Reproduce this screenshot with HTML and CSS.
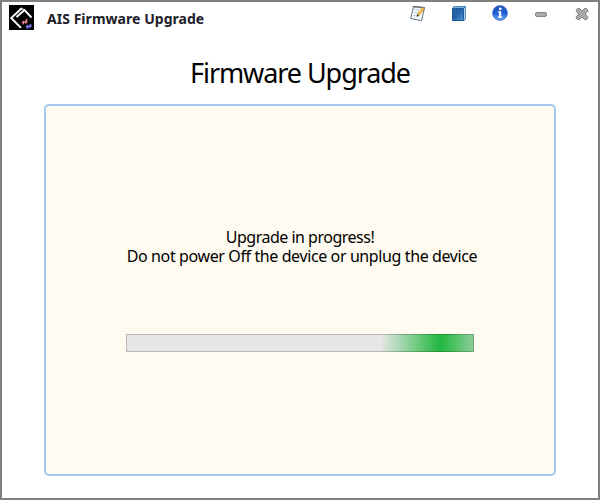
FILE: index.html
```
<!DOCTYPE html>
<html lang="en">
<head>
<meta charset="utf-8">
<title>AIS Firmware Upgrade</title>
<link rel="stylesheet" href="styles.css">
</head>
<body>
<div class="window">
  <header class="titlebar">
    <svg class="logo" viewBox="0 0 25 25">
      <rect width="25" height="25" fill="#000"/>
      <path d="M13 3L2.200 13l9.800 9.800M7.500 12L15.500 5l7 7.500" fill="none" stroke="#fff" stroke-width="1.900"/>
      <path d="M10.500 4.200h4l1.500 1" fill="none" stroke="#fff" stroke-width="1"/>
      <path d="M12 17.500l3-2 1 1.500 1-3h1.500l-.5 2h1l-2 3-1.500-1.500-1 2h-1v-2z" fill="#ef8590"/>
      <path d="M16 21.500l3-2 1 1.500 1-2h1.500l-.5 1.500h1.200l-2.200 3-1.500-1.500-1 2h-1v-2z" fill="#7772e0"/>
    </svg>
    <span class="name">AIS Firmware Upgrade</span>
    <nav class="tools">
      <svg viewBox="0 0 18 18">
        <path d="M4.500 2.500L15.700 3.500 12.500 16.700 1.700 14.500z" fill="#f1f6f9" stroke="#65747f"/>
        <path d="M5.500 5.500l5 .7M5 8.300l5 .7M4 11.200l6 1" stroke="#b4c4ce" stroke-width=".8"/>
        <path d="M4.500 2.700l9.500 1" stroke="#384149" stroke-width="1.600" stroke-dasharray="1 1"/>
        <path d="M9 11l5.500-7" stroke="#e79a24" stroke-width="2.600"/>
        <path d="M9.200 10.200l4.700-6" stroke="#ffd977" stroke-width=".9"/>
        <path d="M7.600 12.700l.5-2.700 2 1.600z" fill="#413d38"/>
      </svg>
      <svg viewBox="0 0 18 18">
        <defs><linearGradient id="book" x1="0" y1="0" x2="1" y2="1"><stop stop-color="#1c5d9f"/><stop offset=".5" stop-color="#2467aa"/><stop offset="1" stop-color="#4f97d2"/></linearGradient></defs>
        <path d="M2 4.500L4 2h12v13l-2 2H2z" fill="#3a78b2"/>
        <path d="M3 4L4.500 2.800h10.300L13.700 4z" fill="#82b5da"/>
        <path d="M14 4.500l1.300-1.500v11.500L14 16z" fill="#b4d3ea"/>
        <path d="M2.500 4.500h11v12h-11z" fill="url(#book)" stroke="#205a98"/>
      </svg>
      <svg viewBox="0 0 18 18">
        <defs><linearGradient id="info" x1="0" y1="0" x2="0" y2="1"><stop stop-color="#1d4fb4"/><stop offset=".5" stop-color="#205fd2"/><stop offset="1" stop-color="#6aa5f2"/></linearGradient></defs>
        <circle cx="9" cy="9" r="7.500" fill="url(#info)" stroke="#3468bd" stroke-width=".6"/>
        <circle cx="9.300" cy="4.800" r="1.400" fill="#fff"/>
        <path d="M6.900 7.300h3.300v5.200h1.100v1.300H6.900v-1.300H8V8.600H6.900z" fill="#fff"/>
      </svg>
      <svg viewBox="0 0 18 18">
        <rect x="3.500" y="8.500" width="11" height="4" rx="1.500" fill="#aaa" stroke="#858585"/>
      </svg>
      <svg viewBox="0 0 18 18">
        <path d="M4.500 4.500h2L9 7l2.500-2.500h2l1.200 1.200v1.800L12 10l2.700 2.500v1.800l-1.200 1.200h-2L9 13l-2.500 2.500h-2l-1.200-1.200v-1.800L6 10 3.300 7.500V5.700z" fill="#aaa" stroke="#808080"/>
      </svg>
    </nav>
  </header>
  <h1>Firmware Upgrade</h1>
  <main class="panel">
    <p class="status">Upgrade in progress!</p>
    <p class="warning">Do not power Off the device or unplug the device</p>
    <div class="progress" role="progressbar"></div>
  </main>
</div>
</body>
</html>
```
FILE: styles.css
```
* { box-sizing: border-box; }
body { margin: 0; font-family: "Noto Sans", sans-serif; color: #000; }
.window {
  width: 600px;
  height: 500px;
  border: 2px solid #808080;
  background: #fff;
  display: flex;
  flex-direction: column;
  align-items: center;
}
.titlebar {
  width: 100%;
  height: 40px;
  padding: 3px 7px 0 7px;
  display: flex;
  align-items: flex-start;
}
.logo { width: 25px; height: 25px; flex: none; }
.name {
  margin-left: 13px;
  padding-top: 4px;
  font-size: 14px;
  line-height: 20px;
  font-weight: 700;
  letter-spacing: 0.04px;
  color: #202028;
  white-space: nowrap;
}
.tools { margin-left: auto; display: flex; gap: 23px; margin-top: -1px; }
.tools svg { width: 18px; height: 18px; display: block; }
h1 {
  margin: 11px 0 0;
  height: 51px;
  font-size: 27px;
  line-height: 40px;
  font-weight: 400;
  letter-spacing: -1.08px;
  white-space: nowrap;
}
.panel {
  width: 512px;
  height: 372px;
  border: 2px solid #a6c8ef;
  border-radius: 5px;
  background: #fffbf0;
  display: flex;
  flex-direction: column;
  align-items: center;
  padding-top: 122px;
}
.panel p { margin: 0; font-size: 16px; line-height: 19px; white-space: nowrap; }
.status { letter-spacing: -0.5px; }
.panel .warning { letter-spacing: -0.39px; margin-left: 4px; }
.progress {
  width: 348px;
  height: 18px;
  margin-top: 68px;
  border: 1px solid rgba(0, 0, 0, 0.2);
  background: linear-gradient(90deg, #e6e6e6 255px, #28b944 312px, #28b944 317px, #8bce98 347px) border-box;
}
```
